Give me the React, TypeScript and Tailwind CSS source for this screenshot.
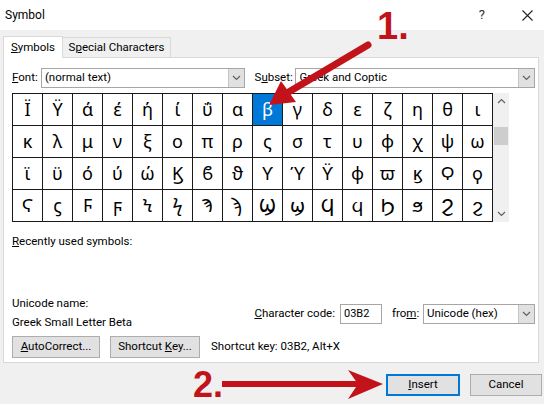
import React from 'react'

const rows = [
  ['Ϊ', 'Ϋ', 'ά', 'έ', 'ή', 'ί', 'ΰ', 'α', 'β', 'γ', 'δ', 'ε', 'ζ', 'η', 'θ', 'ι'],
  ['κ', 'λ', 'μ', 'ν', 'ξ', 'ο', 'π', 'ρ', 'ς', 'σ', 'τ', 'υ', 'φ', 'χ', 'ψ', 'ω'],
  ['ϊ', 'ϋ', 'ό', 'ύ', 'ώ', 'Ϗ', 'ϐ', 'ϑ', 'ϒ', 'ϓ', 'ϔ', 'ϕ', 'ϖ', 'ϗ', 'Ϙ', 'ϙ'],
  ['Ϛ', 'ϛ', 'Ϝ', 'ϝ', 'Ϟ', 'ϟ', 'Ϡ', 'ϡ', 'Ϣ', 'ϣ', 'Ϥ', 'ϥ', 'Ϧ', 'ϧ', 'Ϩ', 'ϩ'],
]

function Chevron({ className = '' }: { className?: string }) {
  return (
    <svg width="9" height="6" viewBox="0 0 9 6" className={className}>
      <path d="M1 1 L4.5 4.5 L8 1" fill="none" stroke="#606060" strokeWidth="1.2" />
    </svg>
  )
}

function Select({ value, width }: { value: string; width: string }) {
  return (
    <div className={`flex h-[20px] ${width} items-center border border-[#a6a6a6] bg-white`}>
      <span className="flex-1 truncate pl-[3px]">{value}</span>
      <div className="flex h-full w-[16px] items-center justify-center border-l border-[#c4c4c4] bg-[#e1e1e1]">
        <Chevron />
      </div>
    </div>
  )
}

function Button({ children, width, primary }: { children: React.ReactNode; width: string; primary?: boolean }) {
  return (
    <div
      className={`flex h-[22px] ${width} items-center justify-center bg-[#e1e1e1] ${
        primary ? 'border-2 border-[#0078d7]' : 'border border-[#adadad]'
      }`}
    >
      {children}
    </div>
  )
}

export default function App() {
  return (
    <div className="relative h-[404px] w-[544px] overflow-hidden bg-[#f0f0f0] text-[11.5px] text-black [font-family:Roboto,'Noto_Sans',sans-serif]">
      {/* title bar */}
      <div className="flex h-[30px] items-center justify-between bg-white pl-[5px] pr-[11px]">
        <span className="text-[12px]">Symbol</span>
        <div className="flex items-center gap-[37px]">
          <span className="text-[13px] text-[#333]">?</span>
          <svg width="11" height="11" viewBox="0 0 11 11">
            <path d="M0.5 0.5 L10.5 10.5 M10.5 0.5 L0.5 10.5" stroke="#222" strokeWidth="1.1" />
          </svg>
        </div>
      </div>

      {/* tabs */}
      <div className="flex h-[27px] items-end pl-[3px] pt-[6px]">
        <div className="relative z-10 -mb-px flex h-[22px] w-[60px] items-center justify-center border border-b-0 border-[#d9d9d9] bg-white">
          <span><u>S</u>ymbols</span>
        </div>
        <div className="flex h-[20px] w-[108px] items-center justify-center border border-b-0 border-l-0 border-[#d9d9d9] bg-[#f0f0f0]">
          <span>S<u>p</u>ecial Characters</span>
        </div>
      </div>

      {/* panel */}
      <div className="ml-[3px] h-[306px] w-[536px] border border-[#d9d9d9] bg-white pl-[8px] pr-[3px] pt-[10px]">
        {/* font row */}
        <div className="flex h-[20px] items-center">
          <span className="w-[29px]"><u>F</u>ont:</span>
          <Select value="(normal text)" width="w-[204px]" />
          <span className="ml-[10px] w-[41px]">S<u>u</u>bset:</span>
          <Select value="Greek and Coptic" width="w-[240px]" />
        </div>

        {/* symbol grid */}
        <div className="mt-[5px] flex">
          <div className="grid grid-cols-[repeat(16,29px)] grid-rows-[repeat(4,31px)] gap-px bg-[#1a1a1a] p-px [font-family:'Noto_Sans','DejaVu_Sans',sans-serif]">
            {rows.flat().map((c, i) =>
              c === 'β' ? (
                <div key={i} className="flex items-center justify-center bg-[#0078d7] text-[18px] text-white">
                  {c}
                </div>
              ) : (
                <div key={i} className="flex items-center justify-center bg-white text-[18px]">
                  {c}
                </div>
              )
            )}
          </div>
          <div className="flex h-[129px] w-[16px] flex-col items-center bg-[#f0f0f0]">
            <div className="flex h-[16px] items-center">
              <Chevron className="rotate-180" />
            </div>
            <div className="mt-[18px] h-[18px] w-[14px] bg-[#cdcdcd]" />
            <div className="flex-1" />
            <div className="flex h-[16px] items-center">
              <Chevron />
            </div>
          </div>
        </div>

        <div className="mt-[11px] h-[16px] leading-[16px]"><u>R</u>ecently used symbols:</div>

        <div className="mt-[46px] flex items-end justify-between">
          <div className="flex flex-col gap-[3px]">
            <span className="h-[16px] leading-[16px]">Unicode name:</span>
            <span className="h-[16px] leading-[16px]">Greek Small Letter Beta</span>
          </div>
          <div className="mb-[6px] flex h-[20px] items-center">
            <span><u>C</u>haracter code:</span>
            <div className="ml-[5px] flex h-[20px] w-[42px] items-center border border-[#a6a6a6] pl-[3px] text-[11px]">03B2</div>
            <span className="ml-[10px] w-[31px]">fro<u>m</u>:</span>
            <Select value="Unicode (hex)" width="w-[112px]" />
          </div>
        </div>

        <div className="mt-[6px] flex items-center">
          <Button width="w-[88px]"><span><u>A</u>utoCorrect...</span></Button>
          <div className="ml-[10px]">
            <Button width="w-[90px]"><span>Shortcut <u>K</u>ey...</span></Button>
          </div>
          <span className="ml-[11px]">Shortcut key: 03B2, Alt+X</span>
        </div>
      </div>

      {/* bottom buttons */}
      <div className="mt-[11px] flex justify-end gap-[10px] pr-[2px]">
        <Button width="w-[74px]" primary><span><u>I</u>nsert</span></Button>
        <Button width="w-[72px]">Cancel</Button>
      </div>

      {/* red annotations */}
      <svg className="pointer-events-none absolute left-0 top-0" width="544" height="404" viewBox="0 0 544 404">
        <line x1="368" y1="45" x2="287" y2="93" stroke="#c2121a" strokeWidth="7" strokeLinecap="round" />
        <polygon points="269,105 281,81 296,102" fill="#c2121a" />
        <line x1="222" y1="384" x2="362" y2="384" stroke="#c2121a" strokeWidth="6" />
        <polygon points="383,384 348,370 358,384 348,399" fill="#c2121a" />
      </svg>
      <span className="absolute left-[377px] top-[7px] text-[38px] font-bold leading-none text-[#c2121a] [font-family:'Liberation_Sans',sans-serif]">1.</span>
      <span className="absolute left-[193px] top-[368px] text-[36px] font-bold leading-[34px] text-[#c2121a] [font-family:'Liberation_Sans',sans-serif]">2.</span>
    </div>
  )
}
